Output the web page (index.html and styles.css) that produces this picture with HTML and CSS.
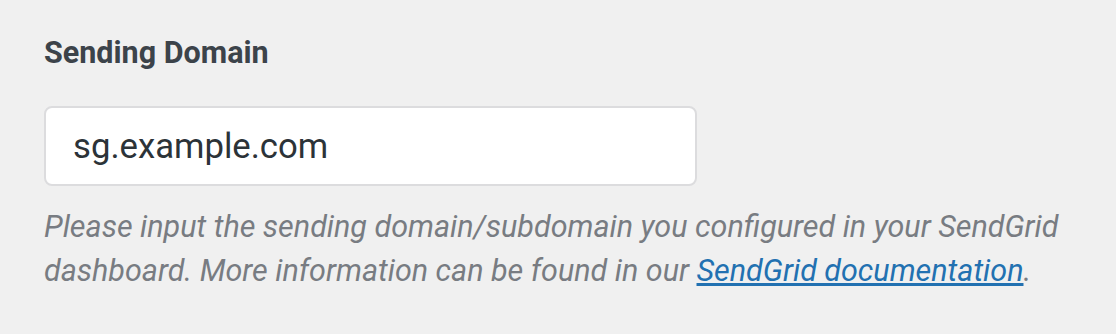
FILE: index.html
```html
<!DOCTYPE html>
<html>
<head>
<meta charset="utf-8">
<link rel="stylesheet" href="styles.css">
</head>
<body>
<div class="field">
  <label class="field-label" for="domain">Sending Domain</label>
  <input class="field-input" id="domain" type="text" value="sg.example.com">
  <p class="field-desc">Please input the sending domain/subdomain you configured in your SendGrid dashboard. More information can be found in our <a href="#">SendGrid documentation</a>.</p>
</div>
</body>
</html>
```
FILE: styles.css
```css
html, body {
  margin: 0;
  padding: 0;
  background: #f0f0f0;
}
body {
  font-family: Roboto, "Liberation Sans", sans-serif;
}
.field {
  display: flex;
  flex-direction: column;
  align-items: flex-start;
  padding: 35px 44px 0 44px;
}
.field-label {
  font-size: 30.5px;
  font-weight: 700;
  color: #3c434a;
  line-height: 36px;
}
.field-input {
  box-sizing: border-box;
  margin-top: 35px;
  width: 653px;
  height: 80px;
  border: 2px solid #dcdcde;
  border-radius: 8px;
  background: #fff;
  padding: 0 27px;
  font-family: Roboto, "Liberation Sans", sans-serif;
  font-size: 34.7px;
  color: #2c3338;
  outline: none;
}
.field-desc {
  margin: 19px 0 0 0;
  font-size: 30.5px;
  font-style: italic;
  line-height: 44px;
  color: #787c82;
  max-width: 1040px;
}
.field-desc a {
  color: #2271b1;
  text-decoration: underline;
}
```
